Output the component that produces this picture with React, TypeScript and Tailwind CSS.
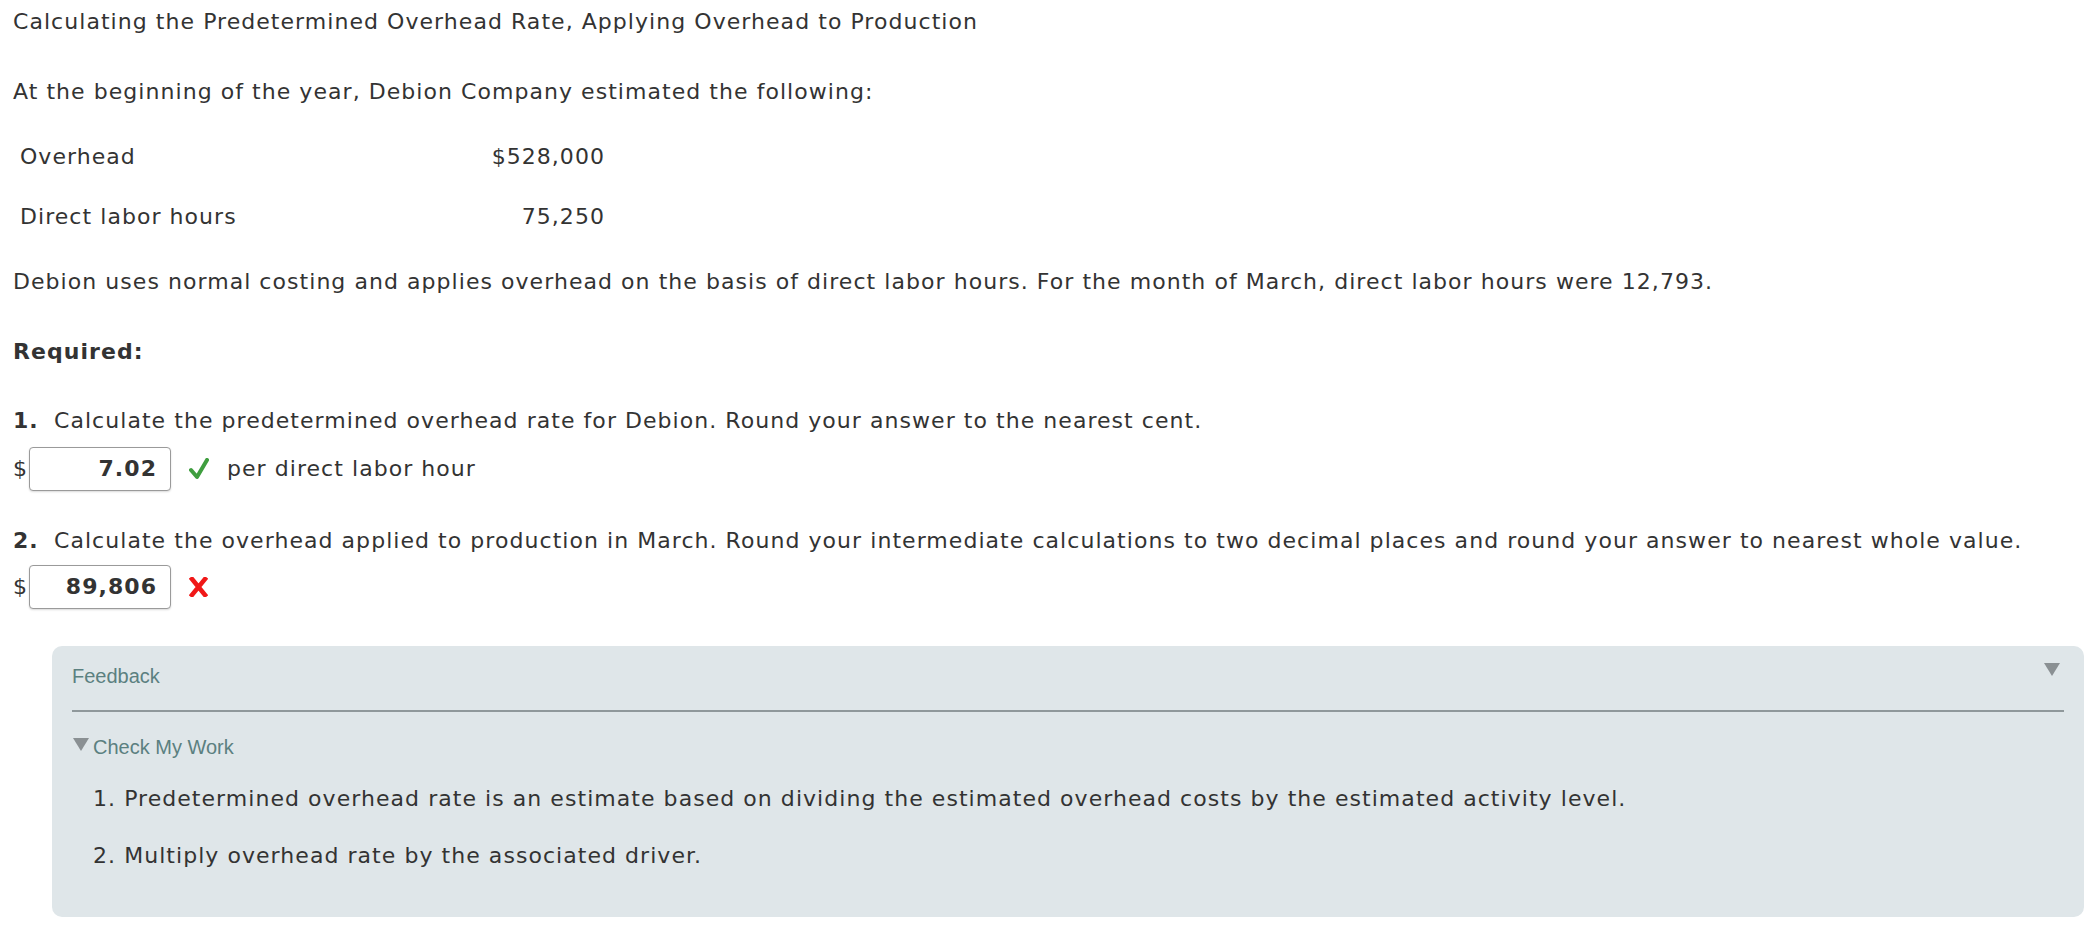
import React from 'react';

const CheckIcon = () => (
    <svg width="20" height="22" viewBox="0 0 20 22" className="block">
        <path d="M2 12 L8 19 L18 2" fill="none" stroke="#3f9e3f" strokeWidth="4" strokeLinecap="round" strokeLinejoin="round" />
    </svg>
);

const CrossIcon = () => (
    <svg width="19" height="20" viewBox="0 0 19 20" className="block">
        <path d="M3 2 L16 18 M16 2 L3 18" fill="none" stroke="#f01818" strokeWidth="4.5" strokeLinecap="square" />
    </svg>
);

const Caret = ({ className }: { className?: string }) => (
    <svg width="16" height="13" viewBox="0 0 16 13" className={className}>
        <path d="M0 0 H16 L8 13 Z" fill="#8a9093" />
    </svg>
);

const AnswerRow = ({ value, mark, after }: { value: string; mark: React.ReactNode; after?: string }) => (
    <div className="flex items-center h-[44px]">
        <span className="w-[16px] tracking-normal">$</span>
        <div className="w-[142px] h-[44px] border-[1.5px] border-[#9a9a9a] rounded-[4px] bg-white shadow-[0_1px_2px_rgba(0,0,0,0.15)] flex items-center justify-end pr-[13px] font-bold">
            {value}
        </div>
        <span className="ml-[18px]">{mark}</span>
        {after && <span className="ml-[18px]">{after}</span>}
    </div>
);

export default function App() {
    return (
        <div className="bg-white min-h-[928px] pl-[13px] pt-[7px] text-[#333] text-[22px] tracking-[1.05px] leading-[30px] font-['DejaVu_Sans',Verdana,sans-serif]">
            <p>Calculating the Predetermined Overhead Rate, Applying Overhead to Production</p>
            <p className="mt-[40px]">At the beginning of the year, Debion Company estimated the following:</p>

            <div className="mt-[35px] ml-[7px] w-[585px]">
                <div className="flex justify-between">
                    <span>Overhead</span>
                    <span>$528,000</span>
                </div>
                <div className="flex justify-between mt-[30px]">
                    <span>Direct labor hours</span>
                    <span>75,250</span>
                </div>
            </div>

            <p className="mt-[35px]">
                Debion uses normal costing and applies overhead on the basis of direct labor hours. For the month of March, direct labor hours were 12,793.
            </p>

            <p className="mt-[40px] font-bold">Required:</p>

            <p className="mt-[39px]">
                <span className="inline-block w-[41px] font-bold">1.</span>
                Calculate the predetermined overhead rate for Debion. Round your answer to the nearest cent.
            </p>
            <div className="mt-[11px]">
                <AnswerRow value="7.02" mark={<CheckIcon />} after="per direct labor hour" />
            </div>

            <p className="mt-[35px]">
                <span className="inline-block w-[41px] font-bold">2.</span>
                Calculate the overhead applied to production in March. Round your intermediate calculations to two decimal places and round your answer to nearest whole value.
            </p>
            <div className="mt-[9px]">
                <AnswerRow value="89,806" mark={<CrossIcon />} />
            </div>

            <div className="mt-[37px] ml-[39px] h-[271px] rounded-[10px] bg-[#dfe6e9] pl-[20px] pr-[20px] pt-[18px]">
                <div className="flex items-center justify-between h-[24px] font-['Liberation_Sans',Arial,sans-serif] text-[20px] leading-[24px] tracking-normal text-[#5b8080]">
                    <span>Feedback</span>
                    <Caret className="mr-[4px] mt-[-14px]" />
                </div>
                <div className="mt-[22px] h-[2px] bg-[#8f989b]" />
                <div className="mt-[23px] flex items-center h-[24px] font-['Liberation_Sans',Arial,sans-serif] text-[20px] leading-[24px] tracking-normal text-[#5b8080]">
                    <Caret className="ml-[1px] mr-[4px] mt-[-6px]" />
                    <span>Check My Work</span>
                </div>
                <div className="pl-[21px]">
                    <p className="mt-[25px]">1. Predetermined overhead rate is an estimate based on dividing the estimated overhead costs by the estimated activity level.</p>
                    <p className="mt-[27px]">2. Multiply overhead rate by the associated driver.</p>
                </div>
            </div>
        </div>
    );
}
